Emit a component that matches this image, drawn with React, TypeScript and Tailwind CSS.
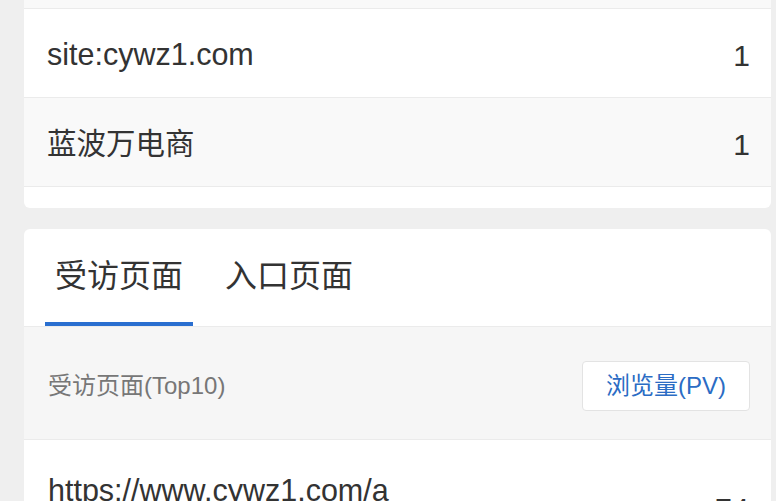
import React from "react";

const font = { fontFamily: '"Liberation Sans", "Noto Sans CJK SC", Arial, sans-serif' };

function Row({ label, value, gray }: { label: string; value: string; gray?: boolean }) {
  return (
    <div
      className={`flex h-[89px] items-center justify-between border-b border-[#ebebeb] pl-[23px] pr-[21px] pt-[4px] text-[30px] text-[#333] ${
        gray ? "bg-[#f9f9f9]" : "bg-white"
      }`}
    >
      <span className={gray ? "text-[29.5px]" : "text-[30.5px]"}>{label}</span>
      <span>{value}</span>
    </div>
  );
}

export default function App() {
  return (
    <div className="h-[501px] w-[776px] overflow-hidden bg-[#efefef] pl-[24px] pr-[5px]" style={font}>
      <div className="overflow-hidden rounded-b-[6px] bg-white">
        <div className="h-[9px] border-b border-[#ebebeb] bg-[#f9f9f9]" />
        <Row label="site:cywz1.com" value="1" />
        <Row label="蓝波万电商" value="1" gray />
        <div className="h-[21px]" />
      </div>

      <div className="mt-[21px] overflow-hidden rounded-t-[6px] bg-white">
        <div className="flex h-[98px] gap-[22px] border-b border-[#ebebeb] pl-[21px]">
          <div className="flex h-[97px] items-center border-b-4 border-[#2a6fd0] px-[10px] text-[32px] text-[#333]">
            受访页面
          </div>
          <div className="flex h-[97px] items-center border-b-4 border-transparent px-[10px] text-[32px] text-[#333]">
            入口页面
          </div>
        </div>
        <div className="flex h-[113px] items-center justify-between border-b border-[#ebebeb] bg-[#f6f6f6] pl-[24px] pr-[21px] pt-[6px]">
          <span className="text-[24px] text-[#777]">受访页面(Top10)</span>
          <div className="flex h-[50px] items-center rounded-[4px] border border-[#e3e3e3] bg-white px-[23px] text-[24px] text-[#2b6cc4]">
            浏览量(PV)
          </div>
        </div>
        <div className="flex items-center justify-between pb-[26px] pl-[24px] pr-[22px] pt-[29px] text-[30.5px] text-[#333]">
          <span className="w-[345px] break-all leading-[42px]">https://www.cywz1.com/archives/1.html</span>
          <span>74</span>
        </div>
      </div>
    </div>
  );
}
